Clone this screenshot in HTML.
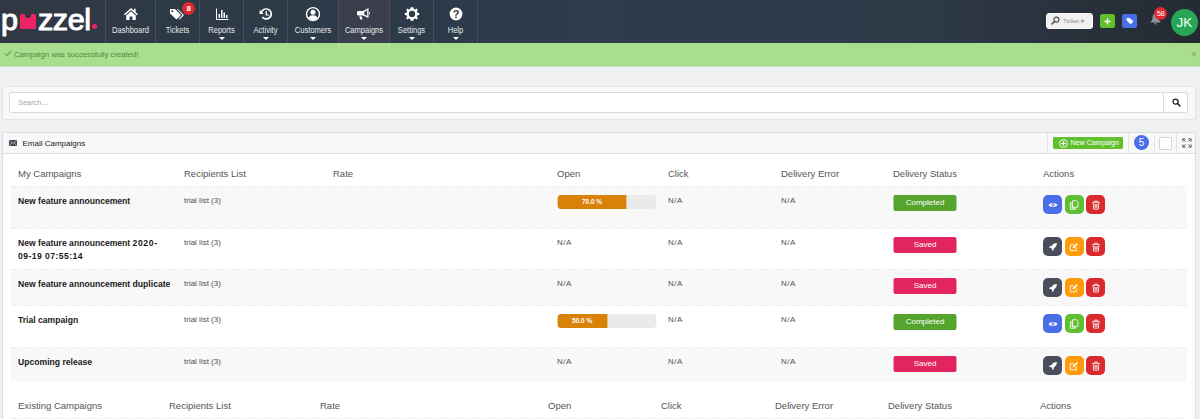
<!DOCTYPE html>
<html lang="en">
<head>
<meta charset="utf-8">
<title>Email Campaigns</title>
<style>
*{box-sizing:border-box;margin:0;padding:0}
html,body{width:1200px;height:419px;overflow:hidden}
body{background:#eff0f1;font-family:"Liberation Sans",sans-serif;color:#333;position:relative}
/* NAVBAR */
#nav{position:absolute;left:0;top:0;width:1200px;height:43px;background:linear-gradient(90deg,#303843 0%,#2d3a48 22%,#2d3b4a 50%,#2e3a48 76%,#242a31 100%)}
#logo{position:absolute;left:0;top:0;width:105px;height:43px}
#logo .t{position:absolute;top:2.6px;font-size:30px;line-height:34px;color:#fff;letter-spacing:0.2px;-webkit-text-stroke:1px #fff;transform-origin:0 0;transform:scaleX(1.02)}
#logo .sq{position:absolute;left:20px;top:13.8px;width:15.7px;height:15.6px;background:#ee2364;border-radius:1.5px}
#logo .nt{position:absolute;left:25px;top:13px;width:6px;height:5px;background:#2f3944;border-radius:0 0 3px 3px}
#logo .dot{position:absolute;left:92px;top:24px;width:5px;height:5px;border-radius:50%;background:#ee2364}
.ni{position:absolute;top:0;height:43px;border-left:1px solid #44505c;color:#fff;text-align:center}
.ni.last{border-right:1px solid #44505c}
.ni.act{background:#3a3e4d}
.ni .lb{position:absolute;left:-10px;right:-10px;top:25px;font-size:8.4px;line-height:10px;color:#e8ebee;transform:scaleX(.9)}
.ni svg.ic{position:absolute;left:50%;top:7px;width:16px;height:14px;margin-left:-8px;overflow:visible}
.ni .car{position:absolute;left:50%;top:37px;margin-left:-3px;width:0;height:0;border-left:3px solid transparent;border-right:3px solid transparent;border-top:3px solid #fff}
.bdg{position:absolute;border-radius:50%;background:#dc2a2e;color:#fff;font-size:8px;text-align:center}
/* ALERT */
#alert{position:absolute;left:0;top:43px;width:1200px;height:23px;background:#a9de8e;color:#4c8a42;font-size:7.7px;line-height:23px;border-bottom:0;box-shadow:0 1px 0 #cce7c0}
#alert .msg{position:absolute;left:14px;top:0}
#alert .x{position:absolute;left:1190.5px;top:0;font-size:10.5px;color:#7fa573}
/* SEARCH */
#sbox{position:absolute;left:2px;top:86px;width:1194px;height:34px;background:#f8f8f9;border:1px solid #e3e4e6;border-radius:2px}
#sinp{position:absolute;left:9px;top:92px;width:1179px;height:21px;background:#fff;border:1px solid #d9dadc;border-radius:2px}
#sinp .ph{position:absolute;left:8px;top:0;font-size:7.4px;line-height:19px;color:#a5a8ac}
#sinp .btn{position:absolute;right:0;top:0;width:24px;height:19px;border-left:1px solid #d9dadc}
/* PANEL */
#panel{position:absolute;left:2px;top:132px;width:1194px;height:300px;background:#fff;border:1px solid #dcdde0;border-radius:2px}
#phead{position:absolute;left:0;top:0;width:1192px;height:21px;background:#f8f8f9;border-bottom:1px solid #dcdde0}
#phead .ttl{position:absolute;left:18.5px;top:0;font-size:8px;line-height:21px;color:#222}
.dv{position:absolute;top:0;width:1px;height:20px;background:#e4e5e7}
.th{position:absolute;font-size:9.5px;line-height:12px;color:#555}
.row{position:absolute;left:11px;width:1176px;border-top:1px solid transparent;background-clip:padding-box}
.row:before{content:"";position:absolute;left:0;top:-1px;width:100%;height:1px;background-image:repeating-linear-gradient(90deg,#e6e6e7 0,#e6e6e7 1.6px,transparent 1.6px,transparent 3.2px)}
.row.odd{background-color:#f8f8f8}
.nm{position:absolute;left:7px;top:8px;font-size:8.6px;line-height:12.5px;white-space:nowrap;font-weight:bold;color:#1a1a1a;width:158px}
.tx{position:absolute;top:8.5px;font-size:8px;line-height:10px;color:#505050}
.na{letter-spacing:.5px}
.st{position:absolute;left:882px;transform:translateX(.5px);top:8px;width:63px;height:16px;border-radius:2px;color:#fff;font-size:8px;line-height:16px;text-align:center}
.st.c{background:#55a42e}
.st.s{background:#e2255f}
.ab{position:absolute;top:8px;width:19px;height:19px;border-radius:5px}
.ab svg{position:absolute;left:4.5px;top:4.5px;width:10px;height:10px}
.pb{position:absolute;left:546px;top:7.5px;width:99px;height:14px;border-radius:4px;background:#eaeaeb;overflow:hidden;transform:translateX(.4px)}
.pb i{position:absolute;left:0;top:0;height:14px;background:#d9820a;color:#fff;font-style:normal;font-size:6.5px;line-height:14px;text-align:center;font-weight:bold}
</style>
</head>
<body>
<div id="nav">
  <div id="logo">
    <span class="t" style="left:1px">p</span>
    <span class="sq"></span><span class="nt"></span>
    <span class="t" style="left:37.6px;letter-spacing:-0.45px">zzel</span>
    <span class="dot"></span>
  </div>
  <div class="ni" style="left:105px;width:50px">
    <svg class="ic" viewBox="0 0 16 14"><path d="M8 1 L1 7.2 L2 8.2 L8 3 L14 8.2 L15 7.2 L12.6 5 V1.8 H11 V3.6 Z M3.2 8.4 L8 4.3 L12.8 8.4 V13 H9.4 V9.6 H6.6 V13 H3.2 Z" fill="#fff"/></svg>
    <span class="lb">Dashboard</span>
  </div>
  <div class="ni" style="left:155px;width:44px">
    <svg class="ic" viewBox="0 0 16 14" style="margin-left:-8.6px"><path d="M1 2 H6 L12 8 L7.5 12.5 L1 6.5 Z" fill="#fff"/><circle cx="3.3" cy="4.2" r="1" fill="#2e3a46"/><path d="M8 2 H9 L15 8 L10.5 12.5 L9.8 11.8 L13.4 8 Z" fill="#fff"/></svg>
    <span class="bdg" style="left:26.3px;top:2.2px;width:13px;height:13px;line-height:13px;font-weight:bold">8</span>
    <span class="lb">Tickets</span>
  </div>
  <div class="ni" style="left:199px;width:44px">
    <svg class="ic" viewBox="0 0 16 14"><path d="M2 1.5 H3 V12 H14.5 V13 H2 Z M4.5 7 H6 V11 H4.5 Z M7 3 H8.5 V11 H7 Z M9.5 5.5 H11 V11 H9.5 Z M12 8 H13.5 V11 H12 Z" fill="#fff"/></svg>
    <span class="lb">Reports</span><span class="car"></span>
  </div>
  <div class="ni" style="left:243px;width:44px">
    <svg class="ic" viewBox="0 0 16 14"><path d="M8.3 1.2 A5.8 5.8 0 1 1 3.6 10.4 L4.9 9.4 A4.2 4.2 0 1 0 4.2 5.6 L5.8 7 H1.6 V2.8 L3 4.2 A5.8 5.8 0 0 1 8.3 1.2 Z M7.6 4 H8.9 V7.4 H11 V8.6 H7.6 Z" fill="#fff"/></svg>
    <span class="lb">Activity</span><span class="car"></span>
  </div>
  <div class="ni" style="left:287px;width:51px">
    <svg class="ic" viewBox="0 0 16 14"><circle cx="8" cy="7.1" r="6.5" fill="none" stroke="#fff" stroke-width="1.4"/><circle cx="8" cy="5.3" r="2.5" fill="#fff"/><path d="M3.5 11 C4.2 8.8 5.8 8.2 8 8.2 C10.2 8.2 11.8 8.8 12.5 11 A5.8 5.8 0 0 1 3.5 11 Z" fill="#fff"/></svg>
    <span class="lb">Customers</span><span class="car"></span>
  </div>
  <div class="ni act" style="left:338px;width:51px">
    <svg class="ic" viewBox="0 0 16 14" style="margin-left:-9.5px"><path d="M13.5 1 V11 L8 8.6 H3.4 A1.4 1.4 0 0 1 2 7.2 V5.4 A1.4 1.4 0 0 1 3.4 4 H8 Z M9.2 5 V7.6 L12.2 9 V3.2 Z M4.2 9.2 H6.6 L7.4 12.6 H5.2 Z M14.2 5 H15 V7.4 H14.2 Z" fill="#fff" fill-rule="evenodd"/></svg>
    <span class="lb">Campaigns</span><span class="car"></span>
  </div>
  <div class="ni" style="left:389px;width:44px">
    <svg class="ic" viewBox="0 0 16 14" style="transform:scale(1.13)"><path d="M8 1 L9.2 1 L9.6 2.6 L10.8 3.1 L12.2 2.2 L13.2 3.2 L12.3 4.6 L12.8 5.8 L14.4 6.2 V7.8 L12.8 8.2 L12.3 9.4 L13.2 10.8 L12.2 11.8 L10.8 10.9 L9.6 11.4 L9.2 13 H6.8 L6.4 11.4 L5.2 10.9 L3.8 11.8 L2.8 10.8 L3.7 9.4 L3.2 8.2 L1.6 7.8 V6.2 L3.2 5.8 L3.7 4.6 L2.8 3.2 L3.8 2.2 L5.2 3.1 L6.4 2.6 L6.8 1 Z M8 4.2 A2.8 2.8 0 1 0 8 9.8 A2.8 2.8 0 1 0 8 4.2 Z" fill="#fff" fill-rule="evenodd"/></svg>
    <span class="lb">Settings</span><span class="car"></span>
  </div>
  <div class="ni last" style="left:433px;width:45px">
    <svg class="ic" viewBox="0 0 16 14"><circle cx="8" cy="7" r="6.4" fill="#fff"/><text x="8" y="11" font-size="11" font-weight="bold" text-anchor="middle" fill="#2e3a46" font-family="Liberation Sans, sans-serif">?</text></svg>
    <span class="lb">Help</span><span class="car"></span>
  </div>

  <div style="position:absolute;left:1046px;top:13px;width:47px;height:16px;background:#f0f0f0;border-radius:3px;border:1px solid #fff">
    <svg style="position:absolute;left:3.5px;top:2.2px;width:9px;height:9px" viewBox="0 0 10 10"><circle cx="6" cy="4" r="2.8" fill="none" stroke="#4a4a4a" stroke-width="1.3"/><path d="M4 6 L1 9" stroke="#4a4a4a" stroke-width="1.6" stroke-linecap="round"/></svg>
    <span style="position:absolute;left:16px;top:0;font-size:6.1px;line-height:14px;color:#858585">Ticket #</span>
  </div>
  <div style="position:absolute;left:1100px;top:14px;width:15px;height:14px;background:#62c02f;border-radius:2.5px">
    <svg style="position:absolute;left:4px;top:3.5px;width:7px;height:7px" viewBox="0 0 7 7"><path d="M3.5 0.5 V6.5 M0.5 3.5 H6.5" stroke="#fff" stroke-width="1.4"/></svg>
  </div>
  <div style="position:absolute;left:1122px;top:14px;width:15px;height:14px;background:#4a6ee8;border-radius:2.5px">
    <svg style="position:absolute;left:3.5px;top:3px;width:8px;height:8px" viewBox="0 0 8 8"><path d="M0.6 1 H3.6 L7.4 4.4 L4.6 7.2 L0.6 3.6 Z" fill="#fff"/></svg>
  </div>
  <svg style="position:absolute;left:1149.6px;top:13.3px;width:11px;height:12px" viewBox="0 0 11 12"><path d="M5.5 0.6 C7.6 0.9 8.4 2.6 8.4 4.6 C8.4 6.8 9.2 8 10.4 8.8 V9.6 H0.6 V8.8 C1.8 8 2.6 6.8 2.6 4.6 C2.6 2.6 3.4 0.9 5.5 0.6 Z M4.2 10.2 H6.8 A1.3 1.3 0 0 1 4.2 10.2 Z" fill="#8d959c"/></svg>
  <span class="bdg" style="left:1154px;top:7px;width:13px;height:13px;line-height:13px;font-size:7.5px;letter-spacing:-0.3px">58</span>
  <div style="position:absolute;left:1171px;top:8.5px;width:27px;height:27px;border-radius:50%;background:#27a657;color:#fff;font-size:13.5px;line-height:27px;text-align:center">JK</div>
</div>

<div id="alert"><svg style="position:absolute;left:4px;top:7px;width:8px;height:7px" viewBox="0 0 8 7"><path d="M0.8 3.6 L3 5.6 L7.2 0.8" fill="none" stroke="#58b83e" stroke-width="1.3"/></svg><span class="msg">Campaign was successfully created!</span><span class="x">×</span></div>

<div id="sbox"></div>
<div id="sinp"><span class="ph">Search...</span><span class="btn"><svg style="position:absolute;left:8px;top:5px;width:9px;height:9px" viewBox="0 0 9 9"><circle cx="3.6" cy="3.6" r="2.5" fill="none" stroke="#222" stroke-width="1.3"/><path d="M5.6 5.6 L8 8" stroke="#222" stroke-width="1.5" stroke-linecap="round"/></svg></span></div>

<div id="panel">
  <div id="phead"><div style="position:absolute;left:1px;top:0;width:1190px;height:20px">
    <svg style="position:absolute;left:5px;top:7px;width:8px;height:6px" viewBox="0 0 8 6"><rect x="0" y="0" width="8" height="6" rx="1" fill="#3c4752"/><path d="M0.8 1 L4 3.4 L7.2 1 M0.8 5 L3 3 M7.2 5 L5 3" stroke="#cfd3d8" stroke-width="0.7" fill="none"/></svg>
    <span class="ttl">Email Campaigns</span>
    <i class="dv" style="left:1043px"></i><i class="dv" style="left:1124px"></i><i class="dv" style="left:1150px"></i><i class="dv" style="left:1172px"></i>
    <div style="position:absolute;left:1049px;top:4px;width:70px;height:12px;background:#62c02f;border-radius:1.5px;color:#fff;font-size:7.1px;line-height:12px">
      <svg style="position:absolute;left:5.5px;top:1.5px;width:9px;height:9px" viewBox="0 0 9 9"><circle cx="4.5" cy="4.5" r="3.9" fill="none" stroke="#fff" stroke-width="0.9"/><path d="M4.5 2.2 V6.8 M2.2 4.5 H6.8" stroke="#fff" stroke-width="1.2"/></svg>
      <span style="position:absolute;left:17.5px;top:0">New Campaign</span>
    </div>
    <div style="position:absolute;left:1130px;top:1.5px;width:15px;height:15px;border-radius:50%;background:#4a6ee8;color:#fff;font-size:10px;line-height:15px;text-align:center">5</div>
    <div style="position:absolute;left:1155px;top:4px;width:13px;height:13px;background:#fff;border:1px solid #d5d6d8;border-radius:1px"></div>
    <svg style="position:absolute;left:1177.5px;top:5px;width:10px;height:10px" viewBox="0 0 11 11"><path d="M1 4 V1 H4 M7 1 H10 V4 M10 7 V10 H7 M4 10 H1 V7 M1 1 L4 4 M10 1 L7 4 M10 10 L7 7 M1 10 L4 7" stroke="#444" stroke-width="0.9" fill="none"/></svg>
  </div></div>
</div>

<!-- table 1 header -->
<span class="th" style="left:18px;top:168px">My Campaigns</span>
<span class="th" style="left:184px;top:168px">Recipients List</span>
<span class="th" style="left:333px;top:168px">Rate</span>
<span class="th" style="left:557px;top:168px">Open</span>
<span class="th" style="left:668px;top:168px">Click</span>
<span class="th" style="left:781px;top:168px">Delivery Error</span>
<span class="th" style="left:893px;top:168px">Delivery Status</span>
<span class="th" style="left:1043px;top:168px">Actions</span>

<div id="rows">
<div class="row odd" style="top:186px;height:42px"><span class="nm">New feature announcement</span><span class="tx" style="left:173px">trial list (3)</span><span class="pb"><i style="width:70%">70.0 %</i></span><span class="tx na" style="left:657px">N/A</span><span class="tx na" style="left:770px">N/A</span><span class="st c">Completed</span><span class="ab" style="left:1032px;background:#4a6ee8"><svg viewBox="0 0 11 11"><path d="M0.6 5.5 C2.4 2.4 8.6 2.4 10.4 5.5 C8.6 8.6 2.4 8.6 0.6 5.5 Z" fill="#fff"/><circle cx="5.5" cy="5.5" r="1.8" fill="#4a6ee8"/><circle cx="5.5" cy="5.5" r="0.8" fill="#fff"/></svg></span><span class="ab" style="left:1053.5px;background:#5fbf33"><svg viewBox="0 0 11 11"><path d="M4 0.8 H8.2 L9.8 2.4 V8 H4 Z M1.4 3 H3.4 V8.8 H7 V10.2 H1.4 Z" fill="none" stroke="#fff" stroke-width="0.9"/></svg></span><span class="ab" style="left:1075px;background:#d92b2e"><svg viewBox="0 0 11 11"><path d="M1.4 2.6 H9.6 M4 2.4 V1.2 H7 V2.4 M2.4 3 L2.9 10 H8.1 L8.6 3 M4.4 4.4 V8.6 M5.5 4.4 V8.6 M6.6 4.4 V8.6" fill="none" stroke="#fff" stroke-width="0.9"/></svg></span></div>
<div class="row " style="top:228px;height:41px"><span class="nm">New feature announcement <span style="letter-spacing:.6px">2020-</span><br><span style="letter-spacing:.45px">09-19 07:55:14</span></span><span class="tx" style="left:173px">trial list (3)</span><span class="tx na" style="left:546px">N/A</span><span class="tx na" style="left:657px">N/A</span><span class="tx na" style="left:770px">N/A</span><span class="st s">Saved</span><span class="ab" style="left:1032px;background:#4a4e5c"><svg viewBox="0 0 11 11"><path d="M9.8 1.2 C7 1.2 5 2.6 3.8 4.6 L2 4.8 L1 6.2 L3 6.4 L4.6 8 L4.8 10 L6.2 9 L6.4 7.2 C8.4 6 9.8 4 9.8 1.2 Z" fill="#fff"/></svg></span><span class="ab" style="left:1053.5px;background:#ff9a0a"><svg viewBox="0 0 11 11"><path d="M8 6 V9.6 H1.4 V3 H5.4" fill="none" stroke="#fff" stroke-width="1"/><path d="M4.2 5.6 L8.6 1.2 L9.8 2.4 L5.4 6.8 L4 7 Z" fill="#fff"/></svg></span><span class="ab" style="left:1075px;background:#d92b2e"><svg viewBox="0 0 11 11"><path d="M1.4 2.6 H9.6 M4 2.4 V1.2 H7 V2.4 M2.4 3 L2.9 10 H8.1 L8.6 3 M4.4 4.4 V8.6 M5.5 4.4 V8.6 M6.6 4.4 V8.6" fill="none" stroke="#fff" stroke-width="0.9"/></svg></span></div>
<div class="row odd" style="top:269px;height:36px"><span class="nm">New feature announcement duplicate</span><span class="tx" style="left:173px">trial list (3)</span><span class="tx na" style="left:546px">N/A</span><span class="tx na" style="left:657px">N/A</span><span class="tx na" style="left:770px">N/A</span><span class="st s">Saved</span><span class="ab" style="left:1032px;background:#4a4e5c"><svg viewBox="0 0 11 11"><path d="M9.8 1.2 C7 1.2 5 2.6 3.8 4.6 L2 4.8 L1 6.2 L3 6.4 L4.6 8 L4.8 10 L6.2 9 L6.4 7.2 C8.4 6 9.8 4 9.8 1.2 Z" fill="#fff"/></svg></span><span class="ab" style="left:1053.5px;background:#ff9a0a"><svg viewBox="0 0 11 11"><path d="M8 6 V9.6 H1.4 V3 H5.4" fill="none" stroke="#fff" stroke-width="1"/><path d="M4.2 5.6 L8.6 1.2 L9.8 2.4 L5.4 6.8 L4 7 Z" fill="#fff"/></svg></span><span class="ab" style="left:1075px;background:#d92b2e"><svg viewBox="0 0 11 11"><path d="M1.4 2.6 H9.6 M4 2.4 V1.2 H7 V2.4 M2.4 3 L2.9 10 H8.1 L8.6 3 M4.4 4.4 V8.6 M5.5 4.4 V8.6 M6.6 4.4 V8.6" fill="none" stroke="#fff" stroke-width="0.9"/></svg></span></div>
<div class="row " style="top:305px;height:42px"><span class="nm">Trial campaign</span><span class="tx" style="left:173px">trial list (3)</span><span class="pb"><i style="width:50%">50.0 %</i></span><span class="tx na" style="left:657px">N/A</span><span class="tx na" style="left:770px">N/A</span><span class="st c">Completed</span><span class="ab" style="left:1032px;background:#4a6ee8"><svg viewBox="0 0 11 11"><path d="M0.6 5.5 C2.4 2.4 8.6 2.4 10.4 5.5 C8.6 8.6 2.4 8.6 0.6 5.5 Z" fill="#fff"/><circle cx="5.5" cy="5.5" r="1.8" fill="#4a6ee8"/><circle cx="5.5" cy="5.5" r="0.8" fill="#fff"/></svg></span><span class="ab" style="left:1053.5px;background:#5fbf33"><svg viewBox="0 0 11 11"><path d="M4 0.8 H8.2 L9.8 2.4 V8 H4 Z M1.4 3 H3.4 V8.8 H7 V10.2 H1.4 Z" fill="none" stroke="#fff" stroke-width="0.9"/></svg></span><span class="ab" style="left:1075px;background:#d92b2e"><svg viewBox="0 0 11 11"><path d="M1.4 2.6 H9.6 M4 2.4 V1.2 H7 V2.4 M2.4 3 L2.9 10 H8.1 L8.6 3 M4.4 4.4 V8.6 M5.5 4.4 V8.6 M6.6 4.4 V8.6" fill="none" stroke="#fff" stroke-width="0.9"/></svg></span></div>
<div class="row odd" style="top:347px;height:35px"><span class="nm">Upcoming release</span><span class="tx" style="left:173px">trial list (3)</span><span class="tx na" style="left:546px">N/A</span><span class="tx na" style="left:657px">N/A</span><span class="tx na" style="left:770px">N/A</span><span class="st s">Saved</span><span class="ab" style="left:1032px;background:#4a4e5c"><svg viewBox="0 0 11 11"><path d="M9.8 1.2 C7 1.2 5 2.6 3.8 4.6 L2 4.8 L1 6.2 L3 6.4 L4.6 8 L4.8 10 L6.2 9 L6.4 7.2 C8.4 6 9.8 4 9.8 1.2 Z" fill="#fff"/></svg></span><span class="ab" style="left:1053.5px;background:#ff9a0a"><svg viewBox="0 0 11 11"><path d="M8 6 V9.6 H1.4 V3 H5.4" fill="none" stroke="#fff" stroke-width="1"/><path d="M4.2 5.6 L8.6 1.2 L9.8 2.4 L5.4 6.8 L4 7 Z" fill="#fff"/></svg></span><span class="ab" style="left:1075px;background:#d92b2e"><svg viewBox="0 0 11 11"><path d="M1.4 2.6 H9.6 M4 2.4 V1.2 H7 V2.4 M2.4 3 L2.9 10 H8.1 L8.6 3 M4.4 4.4 V8.6 M5.5 4.4 V8.6 M6.6 4.4 V8.6" fill="none" stroke="#fff" stroke-width="0.9"/></svg></span></div>
</div>

<!-- table 2 header -->
<span class="th" style="left:18px;top:400px">Existing Campaigns</span>
<span class="th" style="left:169px;top:400px">Recipients List</span>
<span class="th" style="left:320px;top:400px">Rate</span>
<span class="th" style="left:548px;top:400px">Open</span>
<span class="th" style="left:661px;top:400px">Click</span>
<span class="th" style="left:775px;top:400px">Delivery Error</span>
<span class="th" style="left:888px;top:400px">Delivery Status</span>
<span class="th" style="left:1040px;top:400px">Actions</span>
<div style="position:absolute;left:11px;top:418px;width:1176px;height:1px;background-image:repeating-linear-gradient(90deg,#e6e6e7 0,#e6e6e7 1.6px,transparent 1.6px,transparent 3.2px)"></div>
</body>
</html>
